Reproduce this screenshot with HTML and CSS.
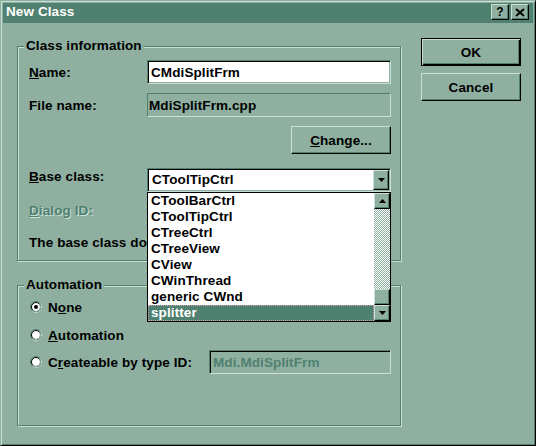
FILE: index.html
```html
<!DOCTYPE html>
<html>
<head>
<meta charset="utf-8">
<title>New Class</title>
<link rel="stylesheet" href="styles.css">
</head>
<body>
<div class="window">
  <div class="titlebar">
    <span class="title">New Class</span>
    <div class="caption-btns">
      <span class="cap-btn raised help">?</span>
      <span class="cap-btn raised close"><svg width="10" height="9" viewBox="0 0 10 9"><path d="M1 1L9 8M9 1L1 8" stroke="#000" stroke-width="2" fill="none"/></svg></span>
    </div>
  </div>
  <div class="body">
    <div class="main">
      <fieldset class="group group-info">
        <legend>Class information</legend>
        <div class="row row-name">
          <span class="lbl"><u>N</u>ame:</span>
          <div class="edit sunken">CMdiSplitFrm</div>
        </div>
        <div class="row row-file">
          <span class="lbl">File name:</span>
          <div class="static">MdiSplitFrm.cpp</div>
        </div>
        <div class="row row-change">
          <span class="btn raised change"><u>C</u>hange...</span>
        </div>
        <div class="row row-base">
          <span class="lbl lbl-base"><u>B</u>ase class:</span>
          <div class="combo sunken">
            <span class="combo-text">CToolTipCtrl</span>
            <span class="combo-btn raised"><svg width="7" height="4" viewBox="0 0 7 4"><polygon points="0,0 7,0 3.5,4" fill="#000"/></svg></span>
            <div class="dropdown">
              <ul class="list">
                <li>CToolBarCtrl</li>
                <li>CToolTipCtrl</li>
                <li>CTreeCtrl</li>
                <li>CTreeView</li>
                <li>CView</li>
                <li>CWinThread</li>
                <li>generic CWnd</li>
                <li class="selected">splitter</li>
              </ul>
              <div class="scrollbar">
                <span class="sb-btn raised"><svg width="7" height="4" viewBox="0 0 7 4"><polygon points="0,4 7,4 3.5,0" fill="#000"/></svg></span>
                <span class="sb-track"></span>
                <span class="sb-thumb raised"></span>
                <span class="sb-btn raised"><svg width="7" height="4" viewBox="0 0 7 4"><polygon points="0,0 7,0 3.5,4" fill="#000"/></svg></span>
              </div>
            </div>
          </div>
        </div>
        <div class="row row-dlg">
          <span class="lbl disabled"><u>D</u>ialog ID:</span>
        </div>
        <div class="row row-note"><span class="note-text">The base class does not require a dialog resource.</span></div>
      </fieldset>
      <fieldset class="group group-auto">
        <legend>Automation</legend>
        <div class="radio r1">
          <svg class="rb" width="12" height="12" viewBox="0 0 12 12"><circle cx="6" cy="6" r="5.5" fill="none" stroke="#508070"/><path d="M9.89 2.11A5.5 5.5 0 0 1 2.11 9.89" fill="none" stroke="#cadfd5"/><circle cx="6" cy="6" r="4.5" fill="#fff" stroke="#000"/><path d="M9.18 2.82A4.5 4.5 0 0 1 2.82 9.18" fill="none" stroke="#8fb0a0"/><circle cx="6" cy="6" r="2" fill="#000"/></svg>
          <span>N<u>o</u>ne</span>
        </div>
        <div class="radio r2">
          <svg class="rb" width="12" height="12" viewBox="0 0 12 12"><circle cx="6" cy="6" r="5.5" fill="none" stroke="#508070"/><path d="M9.89 2.11A5.5 5.5 0 0 1 2.11 9.89" fill="none" stroke="#cadfd5"/><circle cx="6" cy="6" r="4.5" fill="#fff" stroke="#000"/><path d="M9.18 2.82A4.5 4.5 0 0 1 2.82 9.18" fill="none" stroke="#8fb0a0"/></svg>
          <span><u>A</u>utomation</span>
        </div>
        <div class="radio r3">
          <svg class="rb" width="12" height="12" viewBox="0 0 12 12"><circle cx="6" cy="6" r="5.5" fill="none" stroke="#508070"/><path d="M9.89 2.11A5.5 5.5 0 0 1 2.11 9.89" fill="none" stroke="#cadfd5"/><circle cx="6" cy="6" r="4.5" fill="#fff" stroke="#000"/><path d="M9.18 2.82A4.5 4.5 0 0 1 2.82 9.18" fill="none" stroke="#8fb0a0"/></svg>
          <span>C<u>r</u>eateable by type ID:</span>
          <div class="edit sunken edit-disabled">Mdi.MdiSplitFrm</div>
        </div>
      </fieldset>
    </div>
    <div class="side">
      <span class="btn raised default">OK</span>
      <span class="btn raised">Cancel</span>
    </div>
  </div>
</div>
</body>
</html>
```

FILE: styles.css
```css
* { box-sizing: border-box; }
html, body { margin: 0; padding: 0; }
body {
  width: 536px;
  height: 446px;
  overflow: hidden;
  background: #8fb0a0;
  font: bold 13.5px "Liberation Sans", Arial, sans-serif;
  letter-spacing: 0.1px;
  color: #000;
}
u { text-decoration: underline; text-underline-offset: 1px; }

.window {
  width: 536px;
  height: 446px;
  background: #8fb0a0;
  border: 1px solid;
  border-color: #8fb0a0 #000 #000 #8fb0a0;
  box-shadow: inset 1px 1px #cadfd5, inset -1px -1px #508070;
  padding: 2px;
  display: flex;
  flex-direction: column;
}

.titlebar {
  height: 20px;
  flex: none;
  background: #508070;
  color: #fff;
  display: flex;
  align-items: center;
  padding: 0 4px 0 3px;
}
.title {
  flex: 1;
  line-height: 15px;
  margin-top: -3px;
}
.caption-btns { display: flex; gap: 2px; margin-top: -2px; }
.cap-btn {
  width: 18px;
  height: 16px;
  display: flex;
  align-items: center;
  justify-content: center;
  color: #000;
  font-size: 12px;
  line-height: 12px;
}

.raised {
  background: #8fb0a0;
  border: 1px solid;
  border-color: #cadfd5 #000 #000 #cadfd5;
  box-shadow: inset -1px -1px #508070;
}
.sunken {
  border: 1px solid;
  border-color: #508070 #cadfd5 #cadfd5 #508070;
  box-shadow: inset 1px 1px #000, inset -1px -1px #8fb0a0;
}

.body {
  flex: 1;
  display: flex;
  gap: 20px;
  padding: 15px 0 0 14px;
}
.main { width: 384px; display: flex; flex-direction: column; }

.group {
  margin: 1px 0 0 0;
  min-width: 0;
  border: 1px solid #508070;
  box-shadow: inset 1px 1px #cadfd5, 1px 1px #cadfd5;
}
.group legend {
  padding: 0 2px;
  line-height: 14px;
  background: #8fb0a0;
}
.group-info { padding: 7px 9px 9px 11px; }
.group-info legend { margin-left: -5px; }
.group-auto { margin-top: 17px; padding: 7px 9px 51px 12px; }
.group-auto legend { margin-left: -6px; }

.row { display: flex; align-items: center; }
.lbl { width: 118px; flex: none; white-space: nowrap; }
.row-name { height: 24px; }
.row-file { height: 24px; margin-top: 9px; }
.row-change { height: 28px; margin-top: 9px; justify-content: flex-end; }
.row-base { height: 24px; margin-top: 14px; align-items: flex-start; }
.lbl-base { line-height: 16px; margin-top: 1px; }
.row-dlg { height: 16px; margin-top: 10px; }
.row-note { height: 16px; margin-top: 17px; }
.note-text { width: 118px; overflow: hidden; white-space: nowrap; line-height: 16px; }

.disabled { color: #508070; text-shadow: 1px 1px 0 #cadfd5; }

.edit {
  flex: 1;
  height: 24px;
  background: #fff;
  padding: 0 3px;
  display: flex;
  align-items: center;
  white-space: nowrap;
}
.static {
  flex: 1;
  height: 24px;
  border: 1px solid;
  border-color: #508070 #cadfd5 #cadfd5 #508070;
  padding: 0 1px;
  display: flex;
  align-items: center;
}

.btn {
  width: 100px;
  height: 28px;
  display: flex;
  align-items: center;
  justify-content: center;
}
.btn.default {
  border: 1px solid #000;
  box-shadow: inset 1px 1px #cadfd5, inset -1px -1px #000, inset -2px -2px #508070;
}
.side { display: flex; flex-direction: column; gap: 7px; }

.combo {
  position: relative;
  flex: 1;
  height: 24px;
  background: #fff;
  padding: 1px;
  display: flex;
}
.combo-text { flex: 1; padding-left: 3px; line-height: 20px; }
.combo-btn {
  width: 16px;
  height: 20px;
  display: flex;
  align-items: center;
  justify-content: center;
}

.dropdown {
  position: absolute;
  z-index: 2;
  top: calc(100% + 1px);
  left: -1px;
  width: calc(100% + 2px);
  height: 130px;
  background: #fff;
  border: 1px solid #000;
  display: flex;
}
.list { flex: 1; margin: 0; padding: 0; list-style: none; }
.list li { height: 16px; line-height: 16px; padding-left: 3px; white-space: nowrap; }
.list li.selected {
  background: #508070;
  color: #fff;
  outline: 1px dotted #d8a0a8;
  outline-offset: -1px;
}
.scrollbar {
  width: 16px;
  display: flex;
  flex-direction: column;
  background: repeating-conic-gradient(#fff 0 25%, #8fb0a0 0 50%) 0 0 / 2px 2px;
}
.sb-btn {
  height: 16px;
  display: flex;
  align-items: center;
  justify-content: center;
}
.sb-track { flex: 1; }
.sb-thumb { height: 16px; }

.radio { display: flex; align-items: center; gap: 6px; white-space: nowrap; }
.rb { flex: none; }
.r1 { height: 16px; }
.r2 { height: 16px; margin-top: 12px; }
.r3 { height: 24px; margin-top: 7px; }
.edit-disabled {
  flex: none;
  width: 182px;
  margin-left: auto;
  background: #8fb0a0;
  color: #508070;
}
```
